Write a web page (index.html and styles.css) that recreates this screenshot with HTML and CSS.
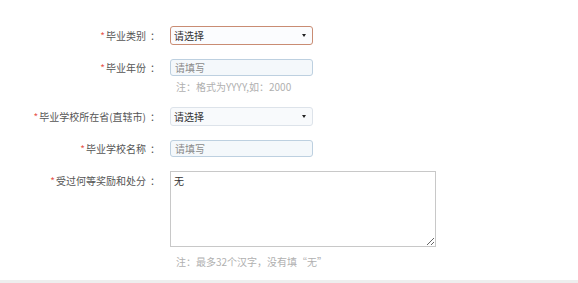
FILE: index.html
```html
<!DOCTYPE html>
<html lang="zh-CN">
<head>
<meta charset="utf-8">
<title>毕业信息</title>
<link rel="stylesheet" href="styles.css">
</head>
<body>
<form class="form">
  <div class="row">
    <label class="label"><span class="star">*</span>毕业类别<span class="colon">：</span></label>
    <div class="field">
      <div class="select-wrap">
        <select class="select select-focus"><option>请选择</option></select>
      </div>
    </div>
  </div>
  <div class="row row-gap">
    <label class="label"><span class="star">*</span>毕业年份<span class="colon">：</span></label>
    <div class="field">
      <input class="input" type="text" placeholder="请填写">
    </div>
  </div>
  <div class="row">
    <span></span>
    <div class="hint hint-1">注：格式为YYYY,如：2000</div>
  </div>
  <div class="row row-gap-2">
    <label class="label"><span class="star">*</span>毕业学校所在省(直辖市)<span class="colon">：</span></label>
    <div class="field">
      <div class="select-wrap">
        <select class="select"><option>请选择</option></select>
      </div>
    </div>
  </div>
  <div class="row row-gap">
    <label class="label"><span class="star">*</span>毕业学校名称<span class="colon">：</span></label>
    <div class="field">
      <input class="input" type="text" placeholder="请填写">
    </div>
  </div>
  <div class="row row-gap row-top">
    <label class="label label-top"><span class="star">*</span>受过何等奖励和处分<span class="colon">：</span></label>
    <div class="field">
      <textarea class="textarea">无</textarea>
    </div>
  </div>
  <div class="row">
    <span></span>
    <div class="hint hint-2">注：最多32个汉字，没有填“无”</div>
  </div>
</form>
<div class="footer"></div>
</body>
</html>
```

FILE: styles.css
```css
html, body {
  margin: 0;
  padding: 0;
  background: #ffffff;
}
body {
  font-family: "Noto Sans CJK SC", "Noto Sans", sans-serif;
  font-size: 10px;
  color: #555555;
  height: 283px;
  overflow: hidden;
}
.form {
  padding-top: 26px;
  height: 254px;
}
.row {
  display: grid;
  grid-template-columns: 160px 1fr;
  column-gap: 10px;
  align-items: center;
}
.row-gap { margin-top: 14px; }
.row-gap-2 { margin-top: 13px; }
.row-top { align-items: start; }
.label {
  text-align: right;
  line-height: 14px;
  color: #555555;
  white-space: nowrap;
}
.label-top { padding-top: 3px; }
.star {
  color: #e8574f;
  margin-right: 1px;
}
.colon {
  margin-left: 4px;
}
.field {
  display: flex;
}
.select-wrap {
  position: relative;
  width: 143px;
}
.select-wrap::after {
  content: "";
  position: absolute;
  right: 7px;
  top: 8px;
  border-left: 2px solid transparent;
  border-right: 2px solid transparent;
  border-top: 3px solid #222222;
}
.select {
  appearance: none;
  -webkit-appearance: none;
  display: block;
  box-sizing: border-box;
  width: 143px;
  height: 19px;
  margin: 0;
  padding: 0 0 0 3px;
  border: 1px solid #dde3ea;
  border-radius: 3px;
  background: #f8fafc;
  font-family: "Noto Sans CJK SC", sans-serif;
  font-size: 10px;
  color: #333333;
  outline: none;
}
.select-focus {
  border-color: #c98c73;
  background: #fbfcfe;
}
.input {
  box-sizing: border-box;
  width: 143px;
  height: 17px;
  margin: 0;
  padding: 0 0 0 4px;
  border: 1px solid #bdd0e0;
  border-radius: 3px;
  background: #f4f8fb;
  font-family: "Noto Sans CJK SC", sans-serif;
  font-size: 10px;
  color: #333333;
  outline: none;
}
.input::placeholder {
  color: #8a8a8a;
}
.textarea {
  box-sizing: border-box;
  width: 266px;
  height: 76px;
  margin: 0;
  padding: 2px 3px;
  border: 1px solid #c8c8c8;
  border-radius: 0;
  background: #ffffff;
  font-family: "Noto Sans CJK SC", sans-serif;
  font-size: 10px;
  line-height: 14px;
  color: #333333;
  outline: none;
}
.hint {
  color: #b0b0b0;
  line-height: 14px;
  padding-left: 6px;
  white-space: nowrap;
}
.hint-1 { margin-top: 4px; }
.hint-2 { margin-top: 8px; }
.footer {
  height: 3px;
  background: #eeeeee;
}
```
